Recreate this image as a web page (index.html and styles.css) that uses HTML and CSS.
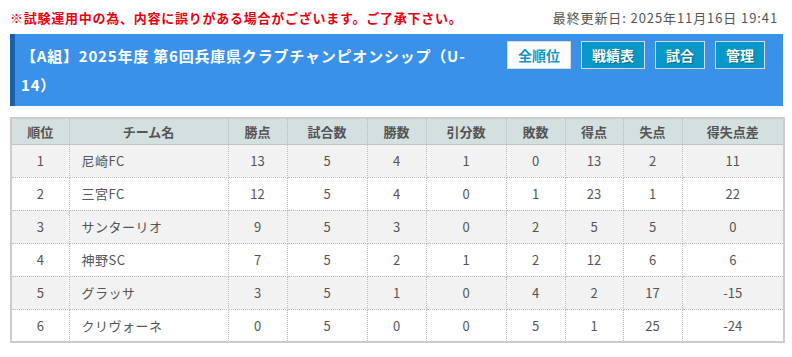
FILE: index.html
```html
<!DOCTYPE html>
<html lang="ja">
<head>
<meta charset="utf-8">
<link rel="stylesheet" href="styles.css">
</head>
<body>
<div class="page">
  <div class="topline">
    <p class="notice">※試験運用中の為、内容に誤りがある場合がございます。ご了承下さい。</p>
    <p class="updated">最終更新日: 2025年11月16日 19:41</p>
  </div>
  <div class="banner">
    <h1 class="title">【A組】2025年度 第6回兵庫県クラブチャンピオンシップ（U-14）</h1>
    <div class="btns">
      <a class="btn btn-active">全順位</a>
      <a class="btn">戦績表</a>
      <a class="btn">試合</a>
      <a class="btn">管理</a>
    </div>
  </div>
  <table class="standings">
    <colgroup>
      <col class="c-rank"><col class="c-team"><col class="c-pts"><col class="c-gp"><col class="c-w"><col class="c-d"><col class="c-l"><col class="c-gf"><col class="c-ga"><col class="c-gd">
    </colgroup>
    <thead>
      <tr><th>順位</th><th>チーム名</th><th>勝点</th><th>試合数</th><th>勝数</th><th>引分数</th><th>敗数</th><th>得点</th><th>失点</th><th>得失点差</th></tr>
    </thead>
    <tbody>
      <tr><td>1</td><td class="team">尼崎FC</td><td>13</td><td>5</td><td>4</td><td>1</td><td>0</td><td>13</td><td>2</td><td>11</td></tr>
      <tr><td>2</td><td class="team">三宮FC</td><td>12</td><td>5</td><td>4</td><td>0</td><td>1</td><td>23</td><td>1</td><td>22</td></tr>
      <tr><td>3</td><td class="team">サンターリオ</td><td>9</td><td>5</td><td>3</td><td>0</td><td>2</td><td>5</td><td>5</td><td>0</td></tr>
      <tr><td>4</td><td class="team">神野SC</td><td>7</td><td>5</td><td>2</td><td>1</td><td>2</td><td>12</td><td>6</td><td>6</td></tr>
      <tr><td>5</td><td class="team">グラッサ</td><td>3</td><td>5</td><td>1</td><td>0</td><td>4</td><td>2</td><td>17</td><td>-15</td></tr>
      <tr><td>6</td><td class="team">クリヴォーネ</td><td>0</td><td>5</td><td>0</td><td>0</td><td>5</td><td>1</td><td>25</td><td>-24</td></tr>
    </tbody>
  </table>
</div>
</body>
</html>
```
FILE: styles.css
```css
* { box-sizing: border-box; }
html, body { margin: 0; padding: 0; background: #fff; }
body {
  font-family: "Noto Sans CJK JP", "Noto Sans", sans-serif;
  color: #555;
}
.page { padding: 8px 9px 0 10px; }
.topline {
  display: flex;
  justify-content: space-between;
  align-items: center;
  height: 20px;
}
.notice {
  margin: 0;
  color: #e60012;
  font-weight: bold;
  font-size: 13px;
  letter-spacing: 0.75px;
  line-height: 20px;
}
.updated {
  margin: 0 5px 0 0;
  font-size: 13px;
  letter-spacing: 0.9px;
  color: #555;
  line-height: 20px;
}
.banner {
  margin-top: 6px;
  display: flex;
  align-items: flex-start;
  background: #3991ea;
  border-left: 5px solid #1b5ea6;
  padding: 7px 18px 7px 6px;
  min-height: 72px;
}
.title {
  flex: 1;
  margin: 0;
  color: #fff;
  font-size: 15px;
  font-weight: bold;
  letter-spacing: 0.8px;
  line-height: 29px;
  padding-right: 25px;
}
.btns {
  display: flex;
  gap: 10px;
}
.btn {
  display: block;
  height: 28px;
  line-height: 26px;
  padding: 0 10px;
  font-size: 14px;
  font-weight: bold;
  color: #fff;
  background: #0898c8;
  border: 1px solid #d8d8d8;
  text-shadow: 1px 1px 1px rgba(0,0,0,0.35);
}
.btn-active {
  background: #fff;
  color: #1595c9;
  text-shadow: none;
}
.standings {
  margin-top: 11px;
  width: 773px;
  border-collapse: collapse;
  table-layout: fixed;
  border: 2px solid #ccc;
  font-size: 13px;
}
.c-rank { width: 58px; }
.c-team { width: 159px; }
.c-pts { width: 59px; }
.c-gp { width: 80px; }
.c-w { width: 59px; }
.c-d { width: 80px; }
.c-l { width: 59px; }
.c-gf { width: 58px; }
.c-ga { width: 59px; }
.c-gd { width: 102px; }
.standings th, .standings td {
  border: 1px dotted #bbb;
  text-align: center;
  color: #555;
  padding: 0;
}
.standings th {
  background: #d4e0e0;
  height: 26px;
  font-weight: bold;
  border-bottom: 1px solid #c4c4c4;
}
.standings td { height: 33px; }
.standings tbody tr:nth-child(odd) td { background: #f2f2f2; }
.standings td.team { text-align: left; padding-left: 12px; letter-spacing: 0.5px; }
```
